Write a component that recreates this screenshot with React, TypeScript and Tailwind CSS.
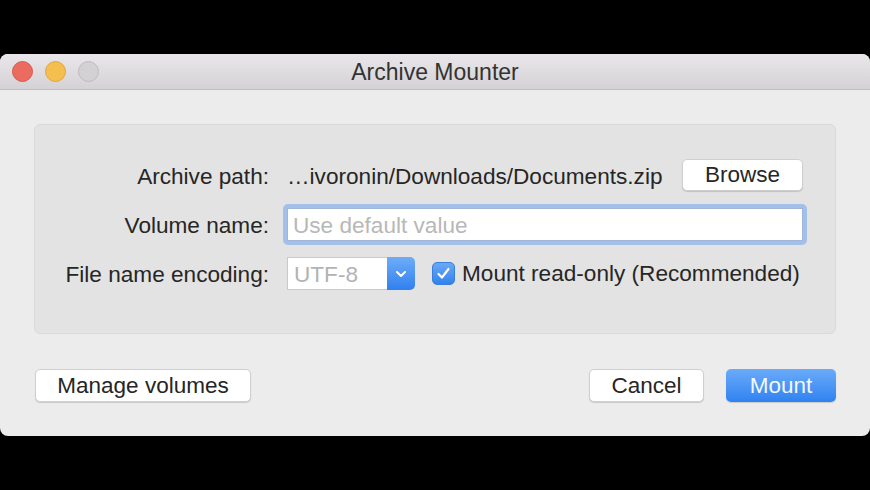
import React from "react";

const font = { fontFamily: '"Liberation Sans", Arial, sans-serif' };

export default function App() {
  return (
    <div className="w-[870px] h-[490px] bg-black pt-[54px]" style={font}>
      <div className="h-[382px] rounded-[8px] bg-[#ececec] overflow-hidden flex flex-col">
        {/* Title bar */}
        <div className="h-[36px] shrink-0 flex items-center relative bg-gradient-to-b from-[#e9e7e9] to-[#d4d2d4] border-b border-[#bfbfbf]">
          <div className="flex items-center gap-[12px] pl-[12px]">
            <span className="w-[21px] h-[21px] rounded-full bg-[#ec6b5f] border border-[#d9574c]" />
            <span className="w-[21px] h-[21px] rounded-full bg-[#f4bf50] border border-[#dea73a]" />
            <span className="w-[21px] h-[21px] rounded-full bg-[#d3d1d3] border border-[#bdbbbd]" />
          </div>
          <div className="absolute inset-0 flex items-center justify-center text-[23px] text-[#333333] leading-none pt-[2px]">
            Archive Mounter
          </div>
        </div>

        {/* Content */}
        <div className="flex-1 px-[34px] pt-[34px] flex flex-col">
          <div className="h-[210px] rounded-[6px] bg-[#e3e3e3] border border-[#d9d9d9] pt-[34px] pr-[28px] flex flex-col text-[22.6px] text-[#262626] leading-none">
            {/* Row 1 */}
            <div className="flex items-center h-[32px]">
              <div className="w-[234px] text-right pt-[5px]">Archive path:</div>
              <div className="ml-[18px] flex-1 pt-[5px]">…ivoronin/Downloads/Documents.zip</div>
              <button className="w-[121px] h-[32px] pt-[1px] rounded-[5px] bg-white border border-[#cfcfcf] shadow-[0_1px_1px_rgba(0,0,0,0.15)] text-[22.5px] text-[#262626] leading-none mr-[4px]">
                Browse
              </button>
            </div>
            {/* Row 2 */}
            <div className="flex items-center h-[41px] mt-[13px]">
              <div className="w-[234px] text-right pt-[4px]">Volume name:</div>
              <div className="ml-[14px] flex-1 h-[41px] rounded-[5px] bg-[#a2c0e9] p-[4px]">
                <div className="h-full bg-white border border-[#9fb6d6] flex items-center pl-[5px] pt-[4px] text-[#b8b8b8]">
                  Use default value
                </div>
              </div>
            </div>
            {/* Row 3 */}
            <div className="flex items-center h-[33px] mt-[12px]">
              <div className="w-[234px] text-right pt-[3px]">File name encoding:</div>
              <div className="ml-[18px] flex h-[33px] w-[128px]">
                <div className="flex-1 bg-white border border-[#cacaca] border-r-0 flex items-center pl-[6px] pt-[3px] text-[#b3b3b3]">
                  UTF-8
                </div>
                <div className="w-[28px] rounded-r-[5px] bg-gradient-to-b from-[#6eacf8] to-[#2f80ef] flex items-center justify-center">
                  <svg width="12" height="8" viewBox="0 0 12 8">
                    <path d="M2 2 L6 6 L10 2" fill="none" stroke="white" strokeWidth="2" strokeLinecap="round" strokeLinejoin="round" />
                  </svg>
                </div>
              </div>
              <div className="ml-[17px] w-[23px] h-[23px] rounded-[5px] bg-gradient-to-b from-[#6aa9f6] to-[#3182ee] border border-[#3a7fd9] flex items-center justify-center">
                <svg width="15" height="13" viewBox="0 0 15 13">
                  <path d="M2.5 7 L6 10.5 L12.5 2" fill="none" stroke="white" strokeWidth="2.2" strokeLinecap="round" strokeLinejoin="round" />
                </svg>
              </div>
              <div className="ml-[7px] pt-[2px]">Mount read-only (Recommended)</div>
            </div>
          </div>

          {/* Bottom buttons */}
          <div className="flex items-center mt-[35px] h-[33px]">
            <button className="ml-[1px] w-[216px] h-[33px] pt-[2px] rounded-[5px] bg-white border border-[#cfcfcf] shadow-[0_1px_1px_rgba(0,0,0,0.15)] text-[22.5px] text-[#262626] leading-none">
              Manage volumes
            </button>
            <div className="flex-1" />
            <button className="w-[115px] h-[33px] pt-[2px] rounded-[5px] bg-white border border-[#cfcfcf] shadow-[0_1px_1px_rgba(0,0,0,0.15)] text-[22.5px] text-[#262626] leading-none">
              Cancel
            </button>
            <button className="ml-[22px] w-[110px] h-[33px] pt-[2px] rounded-[5px] bg-gradient-to-b from-[#6aabf9] to-[#2f82f0] shadow-[0_1px_1px_rgba(0,0,0,0.15)] text-[22.5px] text-[#f4f8ff] leading-none">
              Mount
            </button>
          </div>
        </div>
      </div>
    </div>
  );
}
